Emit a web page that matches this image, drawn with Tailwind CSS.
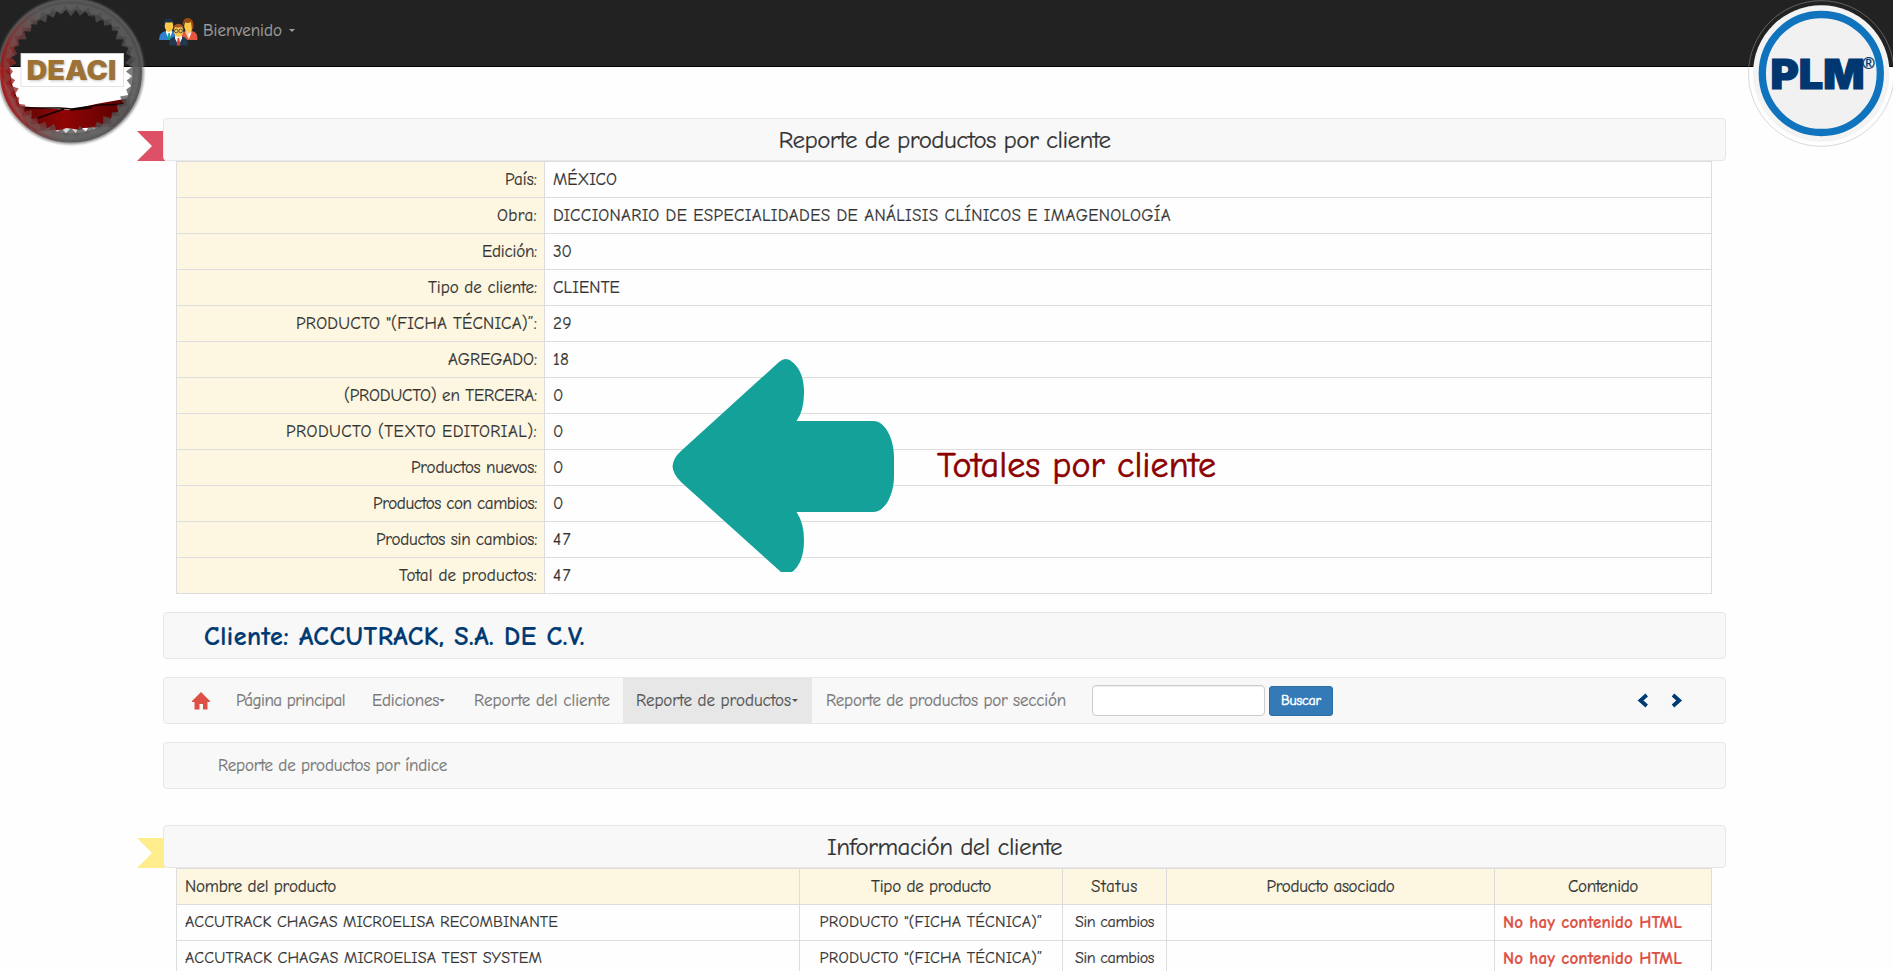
<!DOCTYPE html>
<html lang="es">
<head>
<meta charset="utf-8">
<title>Reporte de productos por cliente</title>
<script src="https://cdn.jsdelivr.net/npm/@tailwindcss/browser@4"></script>
</head>
<body class="relative h-[971px] overflow-hidden bg-[#fefefe] font-['Comic_Sans_MS','Comic_Neue','Open_Sans',sans-serif] text-[17px] leading-6 text-[#333] [-webkit-text-stroke:0.2px]">

<header class="flex h-[67px] items-start border-b border-black bg-[#222] pl-[159px] pt-[17px] text-[#9d9d9d]">
  <svg class="h-[29px] w-[39px]" viewBox="0 0 39 29">
    <path d="M0 23Q0 15 7 14L10 17L13 14Q18 15 18 23Z" fill="#2f80d1"/>
    <path d="M7 13h6v3l-3 6l-3-6z" fill="#f4f4f4"/><path d="M9.300 16h1.500l.8 7h-3z" fill="#1aa584"/>
    <ellipse cx="10" cy="9" rx="4.300" ry="6" fill="#fcc84a"/>
    <path d="M5 8Q4 2 8 1.500Q15 0 15 8L13.500 5Q9 6 6.500 5Z" fill="#1d3145"/>
    <path d="M21 23Q21 15 27 14L30 17L33 14Q39 15 38.500 23Z" fill="#e2583f"/>
    <path d="M26.500 13h6v3l-3 6l-3-6z" fill="#f6c59c"/><path d="M29 17l3-1l-2 6z" fill="#f4f4f4"/>
    <ellipse cx="29.500" cy="9" rx="4.300" ry="6" fill="#fcc84a"/>
    <path d="M24 9Q23 1 29 1Q35 1 34.500 11L33 13L32 5Q28 7 26 5Z" fill="#9a4a12"/>
    <path d="M10 28.500Q9 20.500 16 19.500H23Q29.500 20.500 29 28.500Z" fill="#22384e"/>
    <path d="M16 18.500h7v3l-3.500 7l-3.500-7z" fill="#f4f4f4"/><path d="M18.700 21h1.600l1 7.500h-3.600z" fill="#d93a2e"/>
    <ellipse cx="19.500" cy="14" rx="4.800" ry="6" fill="#fcc84a"/>
    <path d="M14.500 13Q14 7 19.500 6.800Q25 7 24.500 13L23 10Q19 11 16 10Z" fill="#a85a2b"/>
    <g fill="none" stroke="#33475a" stroke-width=".9"><circle cx="17.300" cy="14" r="1.800"/><circle cx="21.700" cy="14" r="1.800"/></g>
  </svg>
  <div class="ml-[5px] flex h-[27px] items-center gap-[7px]"><span data-w="79">Bienvenido</span><i class="border-x-[3.5px] border-t-[3.5px] border-x-transparent border-t-[#9d9d9d]"></i></div>
</header>

<svg class="absolute left-0 top-0 h-[150px] w-[150px] [-webkit-text-stroke:0]" viewBox="0 0 150 150">
  <defs>
    <linearGradient id="rim" x1="0" y1="0.600" x2="1" y2="0.400"><stop offset="0" stop-color="#a31616"/><stop offset=".13" stop-color="#7d3a3a"/><stop offset=".35" stop-color="#555"/><stop offset="1" stop-color="#505050"/></linearGradient>
    <linearGradient id="blood" x1="0" x2="1"><stop offset="0" stop-color="#4a0707"/><stop offset=".5" stop-color="#8f0505"/><stop offset="1" stop-color="#560000"/></linearGradient>
    <clipPath id="disc"><circle cx="71" cy="72" r="69"/></clipPath>
    <filter id="soft"><feGaussianBlur stdDeviation="1"/></filter>
  </defs>
  <circle cx="71" cy="71.500" r="71" fill="none" stroke="#777" stroke-opacity=".75" stroke-width="4" filter="url(#soft)"/>
  <g clip-path="url(#disc)">
    <path d="M0 72L8 60L12 84L20 106L42 108L70 110L96 104L130 98V125L112 127L83 128L73 136L60 130L30 132Z" fill="url(#blood)"/>
    <path d="M20 108L60 108L72 109L100 105L126 104M38 118L64 109M70 110L92 108" fill="none" stroke="#150000" stroke-width="1.500"/>
    <path d="M56 133L66 128L74 129L88 132L98 139H46Z" fill="#d6d6d6"/>
  </g>
  <circle cx="71" cy="71.500" r="66.500" fill="none" stroke="url(#rim)" stroke-width="9" stroke-opacity=".92"/>
  <path id="teeth" fill="url(#rim)" fill-opacity=".75"/>
  <path id="teeth2" fill="#777" fill-opacity=".28"/>
  <rect x="21" y="53.500" width="102.500" height="33" fill="#fff" stroke="#ddd" stroke-width=".8"/>
  <text x="28.300" y="81" textLength="88" lengthAdjust="spacingAndGlyphs" font-family="Inter,sans-serif" font-weight="900" font-size="26.500" fill="#777" fill-opacity=".45" filter="url(#soft)">DEACI</text>
  <text x="26.500" y="80" textLength="90" lengthAdjust="spacingAndGlyphs" font-family="Inter,sans-serif" font-weight="900" font-size="26.500" fill="#9c7237">DEACI</text>
</svg>

<svg class="absolute left-[1743px] top-0 h-[150px] w-[150px] [-webkit-text-stroke:0]" viewBox="0 0 150 150">
  <circle cx="78.300" cy="73.500" r="72.800" fill="none" stroke="#aaa" stroke-opacity=".45" stroke-width="1"/>
  <circle cx="78.300" cy="73.500" r="68.300" fill="#f3f3f3"/>
  <circle cx="78.300" cy="73.500" r="59" fill="#f1f1f1" stroke="#0f74bd" stroke-width="7.300"/>
  <text x="27.500" y="89.300" textLength="94" lengthAdjust="spacingAndGlyphs" font-family="Inter,sans-serif" font-weight="900" font-size="41" fill="#003770" stroke="#003770" stroke-width="1.200">PLM</text>
  <text x="119.500" y="68.500" font-family="'Liberation Sans',sans-serif" font-size="16.500" fill="#003770" stroke="#003770" stroke-width=".4">®</text>
</svg>

<main class="ml-[163px] flex w-[1563px] flex-col pt-[51px]">
  <section class="relative">
    <svg class="absolute -left-[26px] top-[13px] h-[30px] w-[28px]" viewBox="0 0 28 30"><path d="M0 0H28V30H0L15 15Z" fill="#dd5065"/></svg>
    <h1 class="relative flex h-[43px] items-center justify-center rounded border border-[#e7e7e7] bg-[#f8f8f8] text-[25px] leading-none"><span data-w="332">Reporte de productos por cliente</span></h1>
    <div id="totals" class="ml-[13px] w-[1536px] border-x border-t border-[#ddd]"></div>
  </section>

  <section class="mt-[18px] flex h-[47px] items-center rounded border border-[#e7e7e7] bg-[#f8f8f8] pl-[40px] pt-[2px] text-[26px] font-bold text-[#003a72]"><span data-w="381">Cliente: ACCUTRACK, S.A. DE C.V.</span></section>

  <nav class="mt-[18px] flex h-[47px] items-center rounded border border-[#e7e7e7] bg-[#f8f8f8] pl-[28px] text-[#777]">
    <svg class="h-[18px] w-[18px]" viewBox="0 0 18 18"><path d="M9 0L18 9V10H15.500V17.500H11V12H7.500V17.500H2.500V10H0V9Z" fill="#dd5145"/></svg>
    <div class="ml-[26px] w-[136px]"><span data-w="109">Página principal</span></div>
    <div class="flex w-[102px] items-center"><span data-w="67">Ediciones</span><i class="border-x-[3.5px] border-t-[3.5px] border-x-transparent border-t-[#777]"></i></div>
    <div class="w-[149px]"><span data-w="136">Reporte del cliente</span></div>
    <div class="-my-px flex h-[47px] w-[189px] items-center gap-px bg-[#e7e7e7] pl-[13px] text-[#555]"><span data-w="155">Reporte de productos</span><i class="border-x-[3.5px] border-t-[3.5px] border-x-transparent border-t-[#555]"></i></div>
    <div class="w-[280px] pl-[14px]"><span data-w="240">Reporte de productos por sección</span></div>
    <input aria-label="Buscar" class="h-[31px] w-[173px] rounded border border-[#ccc] bg-white px-2 shadow-[inset_0_1px_1px_rgba(0,0,0,0.075)]">
    <button class="ml-1 flex h-[30px] w-[64px] items-center justify-center rounded-[3px] border border-[#2e6da4] bg-[#337ab7] text-[14px] text-white [-webkit-text-stroke:0.5px]"><span data-w="40">Buscar</span></button>
    <svg class="ml-[304px] h-[15px] w-[12px]" viewBox="0 0 12 15"><path d="M9.700 2L3.500 7.500L9.700 13" fill="none" stroke="#003a72" stroke-width="3.800"/></svg>
    <svg class="ml-[22px] h-[15px] w-[12px]" viewBox="0 0 12 15"><path d="M2 2L8.200 7.500L2 13" fill="none" stroke="#003a72" stroke-width="3.800"/></svg>
  </nav>

  <section class="mt-[18px] flex h-[47px] items-center rounded border border-[#e7e7e7] bg-[#f8f8f8] pl-[54px] text-[#777]"><span data-w="229">Reporte de productos por índice</span></section>

  <section class="relative mt-[36px]">
    <svg class="absolute -left-[26px] top-[13px] h-[30px] w-[28px]" viewBox="0 0 28 30"><path d="M0 0H28V30H0L15 15Z" fill="#ffec8d"/></svg>
    <h2 class="relative flex h-[43px] items-center justify-center rounded border border-[#e7e7e7] bg-[#f8f8f8] text-[25px] leading-none"><span data-w="235">Información del cliente</span></h2>
    <div id="products" class="ml-[13px] w-[1536px] border-l border-t border-[#ddd]"></div>
  </section>
</main>

<svg class="absolute left-[672px] top-[358px] h-[215px] w-[223px]" viewBox="672 358 223 215">
  <path d="M672.500 466.500Q673 458 681 451L779 362Q786 356 793 362.500Q804 372 804 392.500Q804 411 796.500 421H873C886 421 894 440 894 457V477C894 493 886 512 873 512H796.500Q804 523 804 540Q804 563 792 572H781L681 482Q673 474 672.500 466.500Z" fill="#13a19a"/>
</svg>
<div class="absolute left-[937px] top-[442px] text-[36px] leading-[48px] text-[#8b0000] [-webkit-text-stroke:0.6px]"><span data-w="279">Totales por cliente</span></div>

<script>
const totals = [
  ['País:', 32, 'MÉXICO', 64], ['Obra:', 40, 'DICCIONARIO DE ESPECIALIDADES DE ANÁLISIS CLÍNICOS E IMAGENOLOGÍA', 618],
  ['Edición:', 55, '30', 19], ['Tipo de cliente:', 109, 'CLIENTE', 67],
  ['PRODUCTO "(FICHA TÉCNICA)”:', 241, '29', 19], ['AGREGADO:', 89, '18', 16],
  ['(PRODUCTO) en TERCERA:', 193, '0', 10], ['PRODUCTO (TEXTO EDITORIAL):', 251, '0', 10],
  ['Productos nuevos:', 126, '0', 10], ['Productos con cambios:', 164, '0', 10],
  ['Productos sin cambios:', 161, '47', 19], ['Total de productos:', 138, '47', 19]];
document.getElementById('totals').innerHTML = totals.map(([a, aw, b, bw]) =>
  `<div class="flex h-[36px] border-b border-[#ddd]">
    <div class="flex w-[368px] items-center justify-end border-r border-[#ddd] bg-[#fdf7e2] pr-[7px] pt-px"><span data-w="${aw}">${a}</span></div>
    <div class="flex items-center pl-[8px] pt-px"><span data-w="${bw}">${b}</span></div>
  </div>`).join('');

const cell = 'flex items-center border-r border-[#ddd] ';
const ficha = ['PRODUCTO "(FICHA TÉCNICA)”', 223];
const rows = [
  [['Nombre del producto', 151], ['Tipo de producto', 120], ['Status', 47], ['Producto asociado', 128], ['Contenido', 70]],
  [['ACCUTRACK CHAGAS MICROELISA RECOMBINANTE', 373], ficha, ['Sin cambios', 79], ['', 0], ['No hay contenido HTML', 179]],
  [['ACCUTRACK CHAGAS MICROELISA TEST SYSTEM', 357], ficha, ['Sin cambios', 79], ['', 0], ['No hay contenido HTML', 179]]];
const columns = ['w-[623px] pl-[8px]', 'w-[263px] justify-center', 'w-[104px] justify-center', 'w-[328px] justify-center', 'w-[217px]'];
document.getElementById('products').innerHTML = rows.map((r, i) =>
  `<div class="flex h-[36px] border-b border-[#ddd] ${i ? 'text-[16px]' : 'bg-[#fdf7e2]'}">` + r.map(([t, w], c) =>
    `<div class="${cell}${columns[c]} ${c < 4 ? (i ? 'pb-px' : '') : i ? 'pl-[8px] text-[17px] font-bold text-[#dd5145]' : 'justify-center'}">${t ? `<span data-w="${w}">${t}</span>` : ''}</div>`).join('') + '</div>').join('');

document.fonts.ready.then(() => document.querySelectorAll('[data-w]').forEach(e => {
  e.classList.add('whitespace-pre');
  const n = e.textContent.length, w = e.getBoundingClientRect().width;
  e.style.letterSpacing = ((e.dataset.w - w) / n) + 'px';
}));

// Serrated inner edge of the round emblem.
function teeth(n, outer, inner, shift) {
  let d = '';
  for (let i = 0; i < n; i++) {
    const p = [[-.6, outer], [0, inner + (i % 3) * 1.5], [.6, outer]].map(([k, r]) => {
      const t = (i + k + shift) * 2 * Math.PI / n;
      return (71 + r * Math.cos(t)).toFixed(1) + ' ' + (71.5 + r * Math.sin(t)).toFixed(1);
    });
    d += 'M' + p.join('L') + 'Z';
  }
  return d;
}
document.getElementById('teeth').setAttribute('d', teeth(40, 63, 55, 0));
document.getElementById('teeth2').setAttribute('d', teeth(34, 68, 58, .5));
</script>
</body>
</html>
